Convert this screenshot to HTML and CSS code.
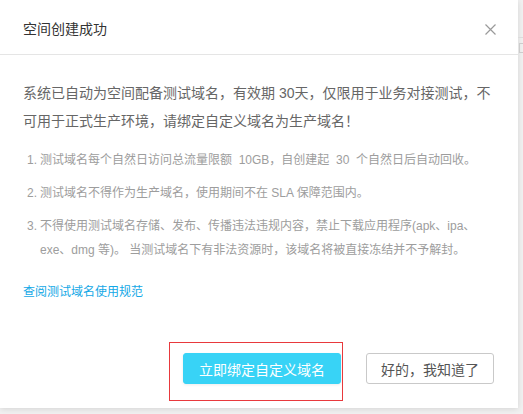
FILE: index.html
```html
<!DOCTYPE html>
<html lang="zh-CN">
<head>
  <meta charset="UTF-8" />
  <meta name="viewport" content="width=device-width, initial-scale=1.0"/>
  <title>空间创建成功</title>
  <link rel="stylesheet" href="styles.css">
</head>
<body>
  <div class="modal">
    <div class="modal-header">
      <h3>空间创建成功</h3>
      <span class="close" title="关闭">
        <svg width="11" height="11" viewBox="0 0 11 11">
          <path d="M0.5 0.5 L10.5 10.5 M10.5 0.5 L0.5 10.5" stroke="#9a9a9a" stroke-width="1.2" fill="none"/>
        </svg>
      </span>
    </div>

    <div class="modal-body">
      <p class="notice">系统已自动为空间配备测试域名，有效期 30天，仅限用于业务对接测试，不可用于正式生产环境，请绑定自定义域名为生产域名！</p>
      <ol class="rules">
        <li><span class="num">1.</span><span>测试域名每个自然日访问总流量限额&nbsp; 10GB，自创建起&nbsp; 30&nbsp; 个自然日后自动回收。</span></li>
        <li><span class="num">2.</span><span>测试域名不得作为生产域名，使用期间不在 SLA 保障范围内。</span></li>
        <li><span class="num">3.</span><span>不得使用测试域名存储、发布、传播违法违规内容，禁止下载应用程序(apk、ipa、exe、dmg 等)。 当测试域名下有非法资源时，该域名将被直接冻结并不予解封。</span></li>
      </ol>
      <a class="link" href="#">查阅测试域名使用规范</a>
    </div>

    <div class="modal-footer">
      <span class="highlight">
        <button class="btn btn-primary">立即绑定自定义域名</button>
      </span>
      <button class="btn btn-default">好的，我知道了</button>
    </div>
  </div>

  <div class="page-edge">
    <div class="edge-line"></div>
    <div class="edge-mark"></div>
  </div>
</body>
</html>
```

FILE: styles.css
```css
body {
  margin: 0;
  display: flex;
  align-items: flex-start;
  background: #f1f1f1;
  font-family: "Liberation Sans", "Noto Sans CJK SC", sans-serif;
  height: 414px;
  overflow: hidden;
}

.modal {
  width: 518px;
  flex: none;
  background: #fff;
  box-shadow: 0 1px 6px rgba(0,0,0,0.12);
}

.modal-header {
  display: flex;
  align-items: center;
  justify-content: space-between;
  padding: 19px 23px 15px 23px;
  border-bottom: 1px solid #e5e5e5;
}

.modal-header h3 {
  margin: 0;
  font-size: 14px;
  font-weight: normal;
  line-height: 20px;
  color: #333;
}

.close {
  display: flex;
  margin-right: -1px;
  cursor: pointer;
}

.modal-body {
  padding: 24px 23px 0 23px;
}

.notice {
  margin: 0;
  font-size: 14px;
  line-height: 28px;
  color: #666;
}

.rules {
  list-style: none;
  margin: 13px 0 0 0;
  padding: 0 0 0 4px;
}

.rules li {
  display: flex;
  font-size: 12px;
  line-height: 24px;
  color: #9d9d9d;
  margin-bottom: 9px;
}

.rules li:last-child {
  margin-bottom: 0;
}

.rules .num {
  flex: none;
  width: 13px;
}

.link {
  display: inline-block;
  margin-top: 20px;
  font-size: 12px;
  line-height: 20px;
  color: #13a8e6;
  text-decoration: none;
}

.modal-footer {
  display: flex;
  justify-content: flex-end;
  align-items: center;
  gap: 25px;
  padding: 51px 24px 24px 23px;
}

.highlight {
  position: relative;
  display: flex;
}

/* red annotation frame round the main action */
.highlight::after {
  content: "";
  position: absolute;
  top: -11px;
  left: -14px;
  right: -2px;
  bottom: -17px;
  border: 1px solid #e8393d;
  pointer-events: none;
}

.btn {
  height: 31px;
  padding: 0 14px;
  font-family: inherit;
  font-size: 14px;
  border-radius: 3px;
  cursor: pointer;
}

.btn-primary {
  padding: 0 15px;
  background: #38d3f6;
  color: #fff;
  border: 1px solid #38d3f6;
  box-shadow: 0 1px 3px rgba(0,0,0,0.08);
}

.btn-default {
  background: #fff;
  color: #555;
  border: 1px solid #c9c9c9;
}

.page-edge {
  flex: 1;
  overflow: hidden;
  padding-top: 37px;
}

.edge-line {
  border-top: 1px solid #dcdcdc;
}

.edge-mark {
  width: 3px;
  height: 8px;
  margin: 5px 0 0 1px;
  border-left: 1px solid #ccc;
  border-top: 1px solid #ccc;
  border-bottom: 1px solid #ccc;
}
```
